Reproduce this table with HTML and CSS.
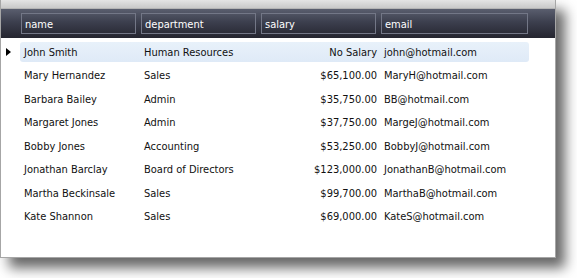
FILE: index.html
```html
<!DOCTYPE html>
<html>
<head>
<meta charset="utf-8">
<link rel="stylesheet" href="styles.css">
</head>
<body>
<div class="panel">
  <div class="topstrip"></div>
  <div class="header">
    <div class="hcell">name</div>
    <div class="hcell">department</div>
    <div class="hcell">salary</div>
    <div class="hcell wide">email</div>
  </div>
  <div class="rows">
    <div class="row">
      <div class="ind"><span class="arrow"></span></div>
      <div class="cells selected">
        <div class="c">John Smith</div><div class="c">Human Resources</div><div class="c num">No Salary</div><div class="c">john@hotmail.com</div>
      </div>
    </div>
    <div class="row">
      <div class="ind"></div>
      <div class="cells">
        <div class="c">Mary Hernandez</div><div class="c">Sales</div><div class="c num">$65,100.00</div><div class="c">MaryH@hotmail.com</div>
      </div>
    </div>
    <div class="row">
      <div class="ind"></div>
      <div class="cells">
        <div class="c">Barbara Bailey</div><div class="c">Admin</div><div class="c num">$35,750.00</div><div class="c">BB@hotmail.com</div>
      </div>
    </div>
    <div class="row">
      <div class="ind"></div>
      <div class="cells">
        <div class="c">Margaret Jones</div><div class="c">Admin</div><div class="c num">$37,750.00</div><div class="c">MargeJ@hotmail.com</div>
      </div>
    </div>
    <div class="row">
      <div class="ind"></div>
      <div class="cells">
        <div class="c">Bobby Jones</div><div class="c">Accounting</div><div class="c num">$53,250.00</div><div class="c">BobbyJ@hotmail.com</div>
      </div>
    </div>
    <div class="row">
      <div class="ind"></div>
      <div class="cells">
        <div class="c">Jonathan Barclay</div><div class="c">Board of Directors</div><div class="c num">$123,000.00</div><div class="c">JonathanB@hotmail.com</div>
      </div>
    </div>
    <div class="row">
      <div class="ind"></div>
      <div class="cells">
        <div class="c">Martha Beckinsale</div><div class="c">Sales</div><div class="c num">$99,700.00</div><div class="c">MarthaB@hotmail.com</div>
      </div>
    </div>
    <div class="row">
      <div class="ind"></div>
      <div class="cells">
        <div class="c">Kate Shannon</div><div class="c">Sales</div><div class="c num">$69,000.00</div><div class="c">KateS@hotmail.com</div>
      </div>
    </div>
  </div>
</div>
</body>
</html>
```
FILE: styles.css
```css
html, body {
  margin: 0;
  padding: 0;
  background: #ffffff;
}
body {
  min-height: 278px;
  font-family: "DejaVu Sans Condensed", "DejaVu Sans", sans-serif;
  font-stretch: condensed;
  font-size: 11px;
  color: #111111;
}
.panel {
  width: 554px;
  height: 257px;
  border-left: 1px solid #a6a6a6;
  border-right: 1px solid #a6a6a6;
  border-bottom: 1px solid #a6a6a6;
  background: #ffffff;
  box-shadow: 9px 10px 12px rgba(0, 0, 0, 0.6);
  display: flex;
  flex-direction: column;
}
.topstrip {
  height: 9px;
  flex: none;
  background: linear-gradient(#e4e4e4, #c9c9c9);
  border-bottom: 1px solid #b4b4b4;
  box-sizing: border-box;
}
.header {
  height: 29px;
  flex: none;
  background: linear-gradient(#5a5e6e, #3c3f4e 45%, #24252f 100%);
  display: flex;
  align-items: flex-start;
  padding: 4px 0 0 20px;
  box-sizing: border-box;
  gap: 5px;
}
.hcell {
  width: 115px;
  height: 21px;
  box-sizing: border-box;
  border: 1px solid #737787;
  color: #ffffff;
  font-size: 11px;
  line-height: 17px;
  padding: 2px 0 0 3px;
}
.hcell.wide {
  width: 147px;
}
.rows {
  padding-top: 4px;
  display: flex;
  flex-direction: column;
  gap: 3.43px;
}
.row {
  display: flex;
  height: 20px;
}
.ind {
  width: 19px;
  display: flex;
  align-items: center;
  padding-left: 5px;
  box-sizing: border-box;
}
.arrow {
  width: 0;
  height: 0;
  border-left: 5px solid #000000;
  border-top: 4.5px solid transparent;
  border-bottom: 4.5px solid transparent;
}
.cells {
  display: flex;
  width: 509px;
  border-radius: 3px;
  line-height: 21px;
}
.cells.selected {
  background: linear-gradient(#e8f1fa, #dfeaf7);
}
.c {
  width: 120px;
  padding-left: 4px;
  box-sizing: border-box;
  white-space: nowrap;
}
.c.num {
  text-align: right;
  padding-left: 0;
  padding-right: 3px;
}
.c:last-child {
  width: 149px;
}
```
